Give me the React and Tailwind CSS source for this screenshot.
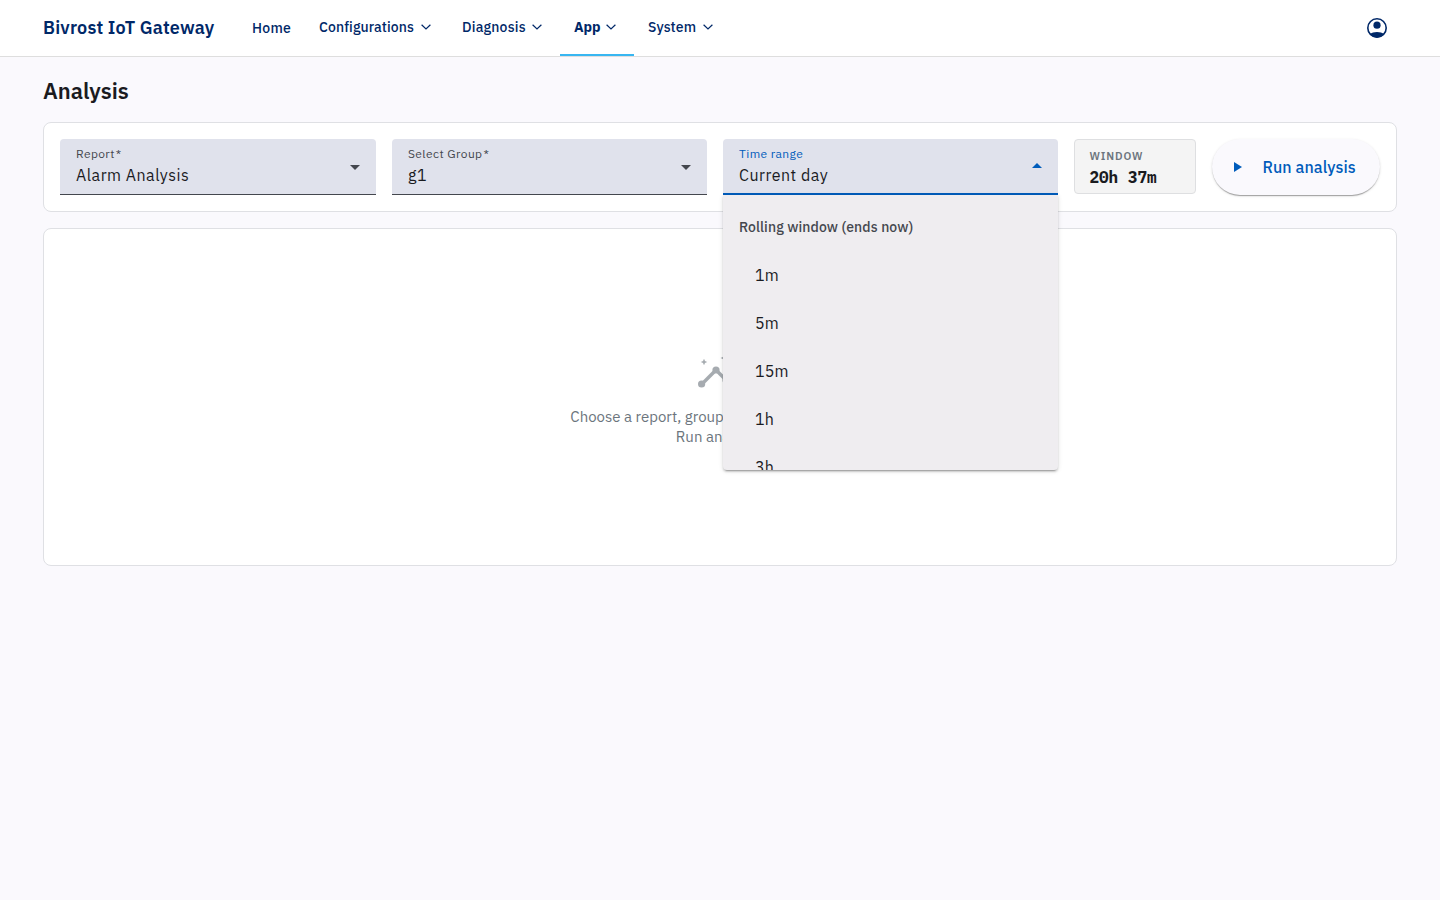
import React, { useState } from 'react'

const navItems = [
    { key: 'home', label: 'Home', hasMenu: false, itemClass: 'mr-7', textClass: 'w-[39px] font-medium tracking-[0.3px]' },
    { key: 'configurations', label: 'Configurations', hasMenu: true, itemClass: 'mr-[31px] pb-0.5', textClass: 'w-[96px] font-medium tracking-[0.1px]' },
    { key: 'diagnosis', label: 'Diagnosis', hasMenu: true, itemClass: 'mr-[18px] pb-0.5', textClass: 'w-[64px] font-medium tracking-[0.2px]' },
    { key: 'app', label: 'App', hasMenu: true, itemClass: 'w-[74px] px-3.5 pb-0.5', textClass: 'w-[26px] font-bold' },
    { key: 'system', label: 'System', hasMenu: true, itemClass: 'ml-3.5 pb-0.5', textClass: 'w-[49px] font-medium tracking-[0.1px]' },
]

const rangeOptions = ['1m', '5m', '15m', '1h', '3h']

const ChevronIcon = () => (
    <svg width="10" height="6" viewBox="0 0 10 6" fill="none" stroke="currentColor" strokeWidth="1.2" className="mb-px shrink-0">
        <path d="M0.6 0.7 5 5 9.4 0.7" />
    </svg>
)

const AccountIcon = () => (
    <svg width="20" height="20" viewBox="0 0 20 20">
        <circle cx="10" cy="10" r="9.2" fill="none" stroke="currentColor" strokeWidth="1.6" />
        <circle cx="10" cy="7.2" r="3.6" fill="currentColor" />
        <path d="M2.6 16C4.7 14.7 7.2 14 10 14s5.3.7 7.4 2A9.4 9.4 0 0 1 10 19.4 9.4 9.4 0 0 1 2.6 16z" fill="currentColor" />
    </svg>
)

const InsightsIcon = () => (
    <svg width="48" height="48" viewBox="0 0 24 24" fill="currentColor">
        <path d="M3 18 10 11l5 5 6-6" fill="none" stroke="currentColor" strokeWidth="1.7" />
        <circle cx="2.8" cy="18" r="1.8" />
        <circle cx="10" cy="11" r="1.8" />
        <circle cx="15" cy="16" r="1.8" />
        <circle cx="21" cy="10" r="1.8" />
        <path d="M4 8.6 3.5 7.5 2.4 7 3.5 6.5 4 5.4 4.5 6.5 5.6 7 4.5 7.5zM15.3 8l-.95-2.05L12.3 5l2.05-.95L15.3 2l.95 2.05L18.3 5l-2.05.95z" />
    </svg>
)

const SelectField = ({ label, required, value, open, onToggle, children }) => (
    <div className="relative">
        <button
            type="button"
            onClick={onToggle}
            className={`flex h-14 w-full items-center justify-between rounded-t bg-[#e0e2ec] px-4 text-left ${open ? 'border-b-2 border-[#005cbb]' : 'border-b border-[#44474e]'}`}
        >
            <span className={`flex flex-col ${open ? 'pt-px' : ''}`}>
                <span className={`text-[12px] leading-4 tracking-[0.4px] ${open ? 'text-[#005cbb]' : 'text-[#44474e]'}`}>
                    {label}
                    {required && <span className="ml-px">*</span>}
                </span>
                <span className="mt-px text-base leading-6 tracking-[0.5px] text-[#1a1b1f]">{value}</span>
            </span>
            <svg width="10" height="5" viewBox="0 0 10 5" className={open ? 'mb-px text-[#005cbb]' : 'mt-px text-[#44474e]'}>
                <path d={open ? 'M0 5 5 0l5 5z' : 'M0 0h10L5 5z'} fill="currentColor" />
            </svg>
        </button>
        {children}
    </div>
)

const App = () => {
    const [open, setOpen] = useState(true)
    const [range, setRange] = useState('Current day')

    const pickRange = (value) => {
        setRange(value)
        setOpen(false)
    }

    return (
        <div className="min-h-screen bg-[#faf9fd] font-['IBM_Plex_Sans',Roboto,sans-serif] text-[#1a1b1f] antialiased">
            <header className="flex h-[57px] items-center border-b border-[#dedede] bg-white pl-[43px] pr-[53px] text-[#002868]">
                <div className="w-[209px] whitespace-nowrap pb-0.5 text-[18px] font-semibold tracking-[0.2px]">Bivrost IoT Gateway</div>
                <nav className="flex h-full">
                    {navItems.map((item) => (
                        <div key={item.key} className={`relative flex h-full shrink-0 items-center ${item.itemClass}`}>
                            <span className={`shrink-0 whitespace-nowrap text-sm ${item.textClass}`}>{item.label}</span>
                            {item.hasMenu && <span className="ml-1.5 flex items-center"><ChevronIcon /></span>}
                            {item.key === 'app' && <span className="absolute inset-x-0 bottom-0 h-0.5 bg-[#38b6f1]" />}
                        </div>
                    ))}
                </nav>
                <button type="button" aria-label="Account" className="ml-auto">
                    <AccountIcon />
                </button>
            </header>

            <main className="px-[43px] pt-[18px]">
                <h1 className="h-[47px] text-[22px] font-semibold leading-8">Analysis</h1>

                {/* Filters */}
                <section className="grid h-[90px] grid-cols-[316px_315px_335px_122px_168px] gap-4 rounded-lg border border-[#dfe0e4] bg-white p-4">
                    <SelectField label="Report" required value="Alarm Analysis" />
                    <SelectField label="Select Group" required value="g1" />
                    <SelectField label="Time range" value={range} open={open} onToggle={() => setOpen(!open)}>
                        {open && (
                            <div className="absolute left-0 top-14 z-10 h-[275px] w-full overflow-hidden rounded-b bg-[#efedf0] py-2 shadow-[0_3px_1px_-2px_rgba(0,0,0,0.2),0_2px_2px_0_rgba(0,0,0,0.14),0_1px_5px_0_rgba(0,0,0,0.12)]">
                                <div className="flex h-12 items-center px-4 text-sm font-medium tracking-[0.1px] text-[#44474e]">Rolling window (ends now)</div>
                                {rangeOptions.map((o) => (
                                    <div key={o} onClick={() => pickRange(o)} className="flex h-12 items-center px-8 text-base tracking-[0.2px]">{o}</div>
                                ))}
                            </div>
                        )}
                    </SelectField>
                    <div className="flex h-[55px] flex-col rounded border border-[#dedfe1] bg-[#f4f4f4] pl-[14.4px] pt-2">
                        <span className="text-[11px] font-semibold leading-4 tracking-[0.9px] text-[#6c757d]">WINDOW</span>
                        <span className="mt-px whitespace-pre font-['IBM_Plex_Mono','Liberation_Mono',monospace] text-base font-bold leading-6">20h 37m</span>
                    </div>
                    <button type="button" className="flex h-14 items-center rounded-full bg-[#faf9fd] pl-[22.4px] text-[#005cbb] shadow-[0_2px_1px_-1px_rgba(0,0,0,0.2),0_1px_1px_0_rgba(0,0,0,0.14),0_1px_3px_0_rgba(0,0,0,0.12)]">
                        <svg width="8" height="10" viewBox="0 0 8 10"><path d="M0 0v10l8-5z" fill="currentColor" /></svg>
                        <span className="ml-5 whitespace-nowrap text-base font-medium tracking-[0.1px]">Run analysis</span>
                    </button>
                </section>

                {/* Empty state */}
                <section className="mt-4 flex h-[338px] flex-col items-center rounded-lg border border-[#dfe0e4] bg-white pt-[119px] text-[#6c757d]">
                    <span className="opacity-60"><InsightsIcon /></span>
                    <p className="mt-[11px] w-[320px] text-center text-[15px] leading-5">
                        Choose a report, group, and time range, then Run analysis.
                    </p>
                </section>
            </main>
        </div>
    )
}

export default App
